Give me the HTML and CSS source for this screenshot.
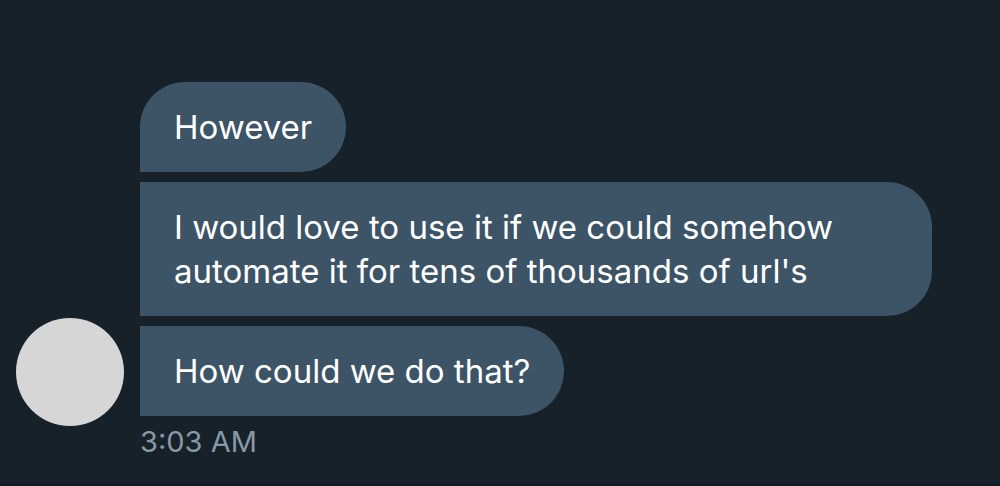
FILE: index.html
```html
<!DOCTYPE html>
<html lang="en">
<head>
<meta charset="utf-8">
<meta name="viewport" content="width=device-width, initial-scale=1">
<title>Messages</title>
<link rel="stylesheet" href="styles.css">
</head>
<body>
<main class="conversation">
  <div class="avatar" role="img" aria-label="Sender"></div>
  <div class="messages">
    <p class="bubble bubble-first">However</p>
    <p class="bubble">I would love to use it if we could somehow automate it for tens of thousands of url's</p>
    <p class="bubble">How could we do that?</p>
  </div>
  <time class="timestamp" datetime="03:03">3:03 AM</time>
</main>
</body>
</html>
```
FILE: styles.css
```css
* {
  box-sizing: border-box;
}

body {
  margin: 0;
  min-height: 100vh;
  background: #17212a;
  border-bottom: 2px solid #131b25;
  font-family: Inter, "Liberation Sans", sans-serif;
}

.conversation {
  display: grid;
  grid-template-columns: 108px minmax(0, 1fr);
  column-gap: 16px;
  padding: 82px 68px 24px 16px;
}

.avatar {
  align-self: end;
  width: 108px;
  height: 108px;
  margin-bottom: -10px;
  border-radius: 50%;
  background: #d6d6d6;
}

.messages {
  display: flex;
  flex-direction: column;
  align-items: flex-start;
  gap: 10px;
}

.bubble {
  margin: 0;
  padding: 23px 34px;
  border-radius: 0 45px 45px 0;
  background: #3d5466;
  color: #fff;
  font-size: 33px;
  line-height: 44px;
}

.bubble-first {
  border-top-left-radius: 45px;
}

.timestamp {
  grid-column: 2;
  margin-top: 8px;
  color: #8899a6;
  font-size: 29px;
  line-height: 36px;
}
```
